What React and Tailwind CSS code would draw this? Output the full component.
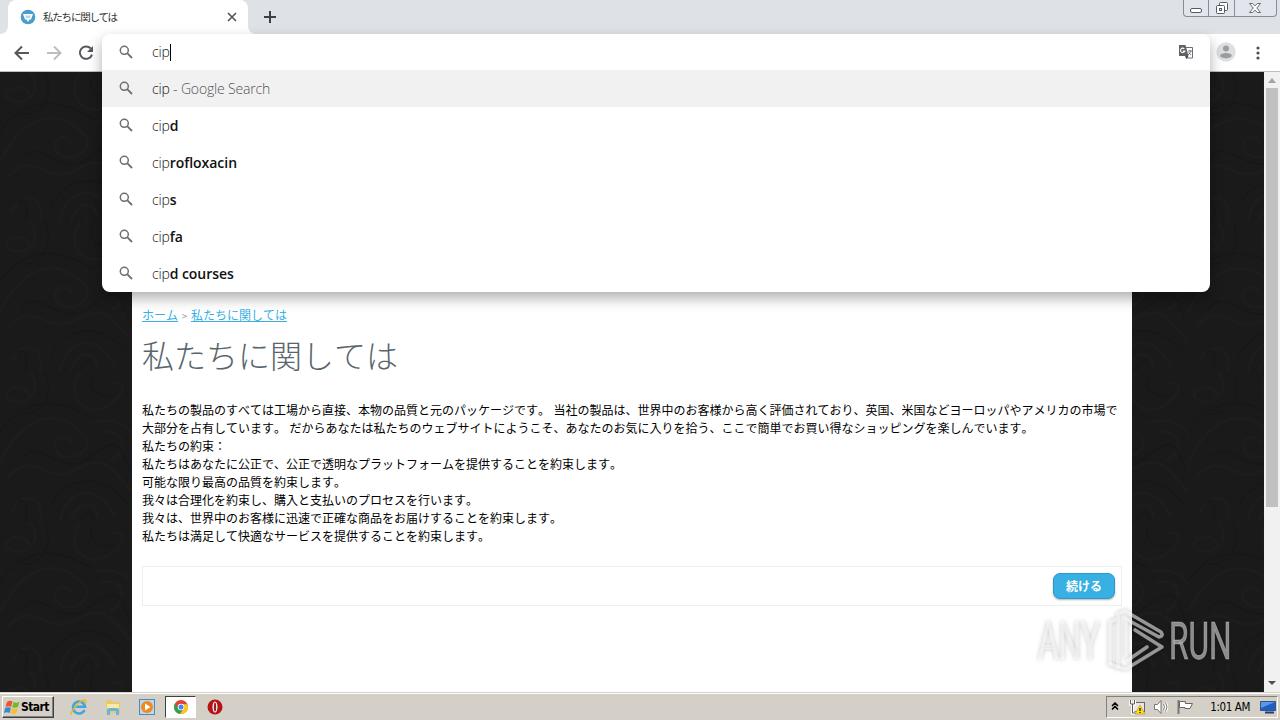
import { ChevronsUp } from 'lucide-react'

const suggestions = [
  { typed: 'cip', rest: '', hint: ' - Google Search' },
  { typed: 'cip', rest: 'd' },
  { typed: 'cip', rest: 'rofloxacin' },
  { typed: 'cip', rest: 's' },
  { typed: 'cip', rest: 'fa' },
  { typed: 'cip', rest: 'd courses' },
]

const paragraphs = [
  '私たちの製品のすべては工場から直接、本物の品質と元のパッケージです。 当社の製品は、世界中のお客様から高く評価されており、英国、米国などヨーロッパやアメリカの市場で',
  '大部分を占有しています。 だからあなたは私たちのウェブサイトにようこそ、あなたのお気に入りを拾う、ここで簡単でお買い得なショッピングを楽しんでいます。',
  '私たちの約束：',
  '私たちはあなたに公正で、公正で透明なプラットフォームを提供することを約束します。',
  '可能な限り最高の品質を約束します。',
  '我々は合理化を約束し、購入と支払いのプロセスを行います。',
  '我々は、世界中のお客様に迅速で正確な商品をお届けすることを約束します。',
  '私たちは満足して快適なサービスを提供することを約束します。',
]

function SearchIcon() {
  return (
    <svg width="16" height="16" viewBox="0 0 16 16" fill="none" stroke="#6b6e72" className="-mt-px shrink-0">
      <circle cx="6.3" cy="6.3" r="4" strokeWidth="1.5" />
      <path d="M9.4 9.4L14 14" strokeWidth="1.8" />
    </svg>
  )
}

function WindowButtons() {
  return (
    <div className="flex h-[17px] w-[94px] rounded-b-[4px] border border-t-0 border-[#868d98] bg-[#e2e5eb]">
      <div className="flex w-[25px] justify-center border-r border-[#868d98]">
        <svg width="14" height="16" fill="#fff" stroke="#555b66">
          <rect x="1.5" y="8.5" width="11" height="4" rx="1.5" />
        </svg>
      </div>
      <div className="flex w-[26px] justify-center border-r border-[#868d98]">
        <svg width="14" height="16" fill="#fff" stroke="#555b66">
          <rect x="4.5" y="2.5" width="8" height="8" rx="1" />
          <rect x="1.5" y="5.5" width="8" height="8" rx="1" />
          <rect x="4.5" y="8.5" width="2" height="2" />
        </svg>
      </div>
      <div className="flex flex-1 justify-center pr-[2px]">
        <svg width="14" height="16" fill="#fff" stroke="#555b66" strokeWidth="0.9">
          <path d="M1.5 3.5h3.2L7 5.9l2.3-2.4h3.2L8.8 8l3.7 4.5H9.3L7 10.1l-2.3 2.4H1.5L5.2 8z" />
        </svg>
      </div>
    </div>
  )
}

function TabStrip() {
  return (
    <div className="flex h-[34px] bg-[#dee1e6]">
      <div className="flex w-2 items-end bg-white">
        <div className="h-[34px] w-2 rounded-br-lg bg-[#dee1e6]" />
      </div>
      <div className="flex h-[34px] w-[240px] items-center rounded-t-lg bg-white pl-3 pr-[9px]">
        <svg width="16" height="16" viewBox="0 0 16 16" className="shrink-0">
          <circle cx="8" cy="8" r="7.3" fill="#4a9cca" />
          <path d="M3 5h10l-2 5.5H9.5L8 13l-1.5-2.5H5z" fill="#fff" />
          <path d="M5 6.5h6l-1 2.5H6z" fill="#b5d9ed" />
        </svg>
        <span className="ml-[7px] flex-1 whitespace-nowrap text-[10.5px] leading-4 tracking-[-1.2px] text-[#333]">私たちに関しては</span>
        <svg width="14" height="14" viewBox="0 0 14 14" stroke="#54585c" strokeWidth="1.7">
          <path d="M3 3l8 8M11 3l-8 8" />
        </svg>
      </div>
      <div className="flex w-2 bg-white">
        <div className="h-[34px] w-2 rounded-bl-lg bg-[#dee1e6]" />
      </div>
      <svg width="14" height="14" viewBox="0 0 14 14" stroke="#3c4043" strokeWidth="2" className="ml-[7px] mt-[10px]">
        <path d="M7 1v12M1 7h12" />
      </svg>
      <div className="ml-auto mr-[3px]"><WindowButtons /></div>
    </div>
  )
}

function Toolbar() {
  return (
    <div className="flex h-[38px] items-center border-b border-[#b9bcc0] bg-white pl-[14px] pr-[14px]">
      <svg width="16" height="16" viewBox="0 0 16 16" fill="none" stroke="#55595d" strokeWidth="2">
        <path d="M15 8H2M8 1.5L1.5 8L8 14.5" />
      </svg>
      <svg width="16" height="16" viewBox="0 0 16 16" fill="none" stroke="#bbbdbf" strokeWidth="2" className="ml-4">
        <path d="M1 8h13M8 1.5L14.5 8L8 14.5" />
      </svg>
      <svg width="16" height="16" viewBox="0 0 16 16" fill="none" stroke="#55595d" strokeWidth="2" className="ml-4">
        <path d="M12.7 3.4A6.2 6.2 0 1 0 14 9.6" />
        <path d="M15 1v6H9z" fill="#55595d" stroke="none" />
      </svg>
      <svg width="20" height="20" viewBox="0 0 20 20" className="-mt-[2px] ml-auto">
        <circle cx="10" cy="10" r="9.7" fill="#dedfe0" />
        <circle cx="10" cy="6.5" r="3" fill="#9b9da0" />
        <ellipse cx="10" cy="13.7" rx="5.7" ry="2.7" fill="#9b9da0" />
      </svg>
      <svg width="6" height="16" viewBox="0 0 6 16" fill="#4d5155" className="ml-[19px] mr-[5px]">
        <circle cx="3" cy="3" r="1.6" />
        <circle cx="3" cy="8" r="1.6" />
        <circle cx="3" cy="13" r="1.6" />
      </svg>
    </div>
  )
}

function TranslateIcon() {
  return (
    <svg width="16" height="16" viewBox="0 0 16 16">
      <path d="M6.5 3.5h8v10.5H8z" fill="#fff" stroke="#6a6e73" />
      <path d="M1 1h6.5l3 11H1z" fill="#5f6368" />
      <path d="M6.3 4.8A2.2 2.2 0 1 0 6.8 7H4.8" fill="none" stroke="#fff" strokeWidth="1.1" />
      <path d="M10 7h4M12 6v1M13.2 7l-3 4M10.7 8.5l2.5 2.5" fill="none" stroke="#6a6e73" strokeWidth="0.9" />
      <path d="M7.5 12h3l-2 3z" fill="#45494d" />
    </svg>
  )
}

function Omnibox() {
  return (
    <div className="absolute left-[102px] top-[34px] z-10 w-[1108px] overflow-hidden rounded-lg bg-white font-['Open_Sans',sans-serif] text-[14px] text-[#111] shadow-[0_6px_14px_rgba(0,0,0,0.32)]">
      <div className="flex h-[36px] items-center pl-4 pr-4">
        <SearchIcon />
        <span className="-mt-px ml-[18px] font-light tracking-[-0.2px]">cip</span>
        <span className="h-[17px] w-px bg-black" />
        <span className="ml-auto"><TranslateIcon /></span>
      </div>
      {suggestions.map((s, i) => (
        <div key={i} className={`flex h-[37px] items-center pl-4 ${i === 0 ? 'bg-[#f1f1f1]' : ''}`}>
          <SearchIcon />
          <span className="ml-[18px] whitespace-pre font-light tracking-[-0.17px]">
            {s.typed}
            <span className="font-semibold tracking-[-0.03px]">{s.rest}</span>
            {s.hint && <span className="text-[#505357]">{s.hint}</span>}
          </span>
        </div>
      ))}
    </div>
  )
}

// faint damask wallpaper on both sides of the shop page
function Wallpaper() {
  return (
    <svg className="absolute inset-0 h-full w-full">
      <defs>
        <pattern id="damask" width="132" height="150" patternUnits="userSpaceOnUse">
          <g fill="none" stroke="#1d1d1d" strokeWidth="2">
            <path d="M0 90C25 40 60 35 86 65C95 82 60 95 55 75C53 64 70 62 72 72" />
            <path d="M8 105C35 75 45 115 75 98S110 95 132 120" />
            <path d="M30 0C45 20 25 35 10 28S25 5 30 25M80 0C65 25 85 45 105 35S130 5 110 12" />
            <path d="M40 150C45 120 20 120 12 140M60 150C65 115 100 110 115 145M70 150C80 125 95 130 98 145" />
            <path d="M100 60C130 55 125 85 110 88M95 50C115 45 132 55 132 65" />
          </g>
          <g fill="none" stroke="#171717" strokeWidth="2">
            <path d="M0 60C20 30 50 20 95 48M20 88C40 60 60 110 90 85S120 75 130 100" />
            <path d="M45 0C55 25 40 45 20 42M95 0C85 15 95 28 115 22M25 150C30 130 22 125 18 132" />
            <path d="M50 135C65 105 100 98 125 130M80 150C88 135 92 138 93 148" />
          </g>
        </pattern>
      </defs>
      <rect width="100%" height="100%" fill="url(#damask)" />
    </svg>
  )
}

function Watermark() {
  return (
    <svg width="206" height="68" viewBox="0 0 206 68" className="absolute left-[1034px] top-[606px] z-10 overflow-visible drop-shadow-[0_0_2px_rgba(0,0,0,0.4)]">
      <g fill="#fff" fillOpacity="0.5" stroke="#fff" strokeOpacity="0.3" strokeWidth="1" fontFamily="Roboto, sans-serif" fontSize="51">
        <text transform="translate(4 53) scale(0.62 1)">ANY</text>
        <text transform="translate(135 53) scale(0.62 1)">RUN</text>
      </g>
      <g fill="none" stroke="#fff" strokeOpacity="0.55" strokeWidth="3.6" strokeLinejoin="round" strokeLinecap="round">
        <path d="M76 58V16l8-3M84 61V8l7-3l36 21q3 4-2 5L92 13v37" />
        <path d="M101 24l27 17L92 63l-8-2M94 54l19-13M76 58l8 3" />
      </g>
    </svg>
  )
}

function Page() {
  return (
    <div className="relative flex h-[620px] bg-[#1a1a1a]">
      <Wallpaper />
      <div className="relative ml-[132px] w-[1000px] bg-white px-[10px] pt-[233px] [font-kerning:none]">
        <div className="flex h-[20px] items-center text-[12px] text-[#38b0e3]">
          <span className="underline">ホーム</span>
          <span className="w-[13px] text-center text-[10px] text-[#999]">&gt;</span>
          <span className="underline">私たちに関しては</span>
        </div>
        <h1 className="mt-[5px] h-[48px] text-[32px] font-light leading-[48px] text-[#59656c]">私たちに関しては</h1>
        <div className="mt-[23px] whitespace-nowrap text-[12px] leading-[18px] text-black">
          {paragraphs.map((p, i) => <p key={i} className="[word-spacing:0.8px]">{p}</p>)}
        </div>
        <div className="mt-[21px] flex h-[40px] w-[980px] items-center justify-end border border-[#eee] pr-[6px]">
          <button className="h-[26px] w-[62px] rounded-[7px] border border-[#2b9bcb] bg-[#38b0e3] text-[12px] font-bold leading-[22px] text-white shadow-[0_1px_2px_rgba(0,0,0,0.3)]">続ける</button>
        </div>
      </div>
      <div className="relative ml-auto flex w-[16px] flex-col items-center bg-[#f1f1f1]">
        <svg width="16" height="16" fill="#a3a3a3"><path d="M8 6l4 5H4z" /></svg>
        <div className="h-[419px] w-[12px] bg-[#c1c1c1]" />
        <svg width="16" height="16" fill="#505050" className="mt-auto"><path d="M4 5h8l-4 4z" /></svg>
      </div>
    </div>
  )
}

function Taskbar() {
  return (
    <div className="flex h-[28px] items-center border-t border-[#d4d0c8] bg-[#d4d0c8] pl-[2px] pt-px shadow-[inset_0_1px_0_#fff]">
      <div className="flex h-[22px] w-[52px] items-center border border-b-[#404040] border-l-white border-r-[#404040] border-t-white pl-[1px] shadow-[inset_-1px_-1px_0_#808080]">
        <svg width="17" height="17" viewBox="0 0 17 17" className="shrink-0">
          <path d="M3 3q3-2 5.5-.5L7.2 8Q4.5 6.5 1.5 8z" fill="#e9572b" />
          <path d="M9.5 3q3 1.5 6-.3L14 8q-3 1.5-5.7.3z" fill="#74b82c" />
          <path d="M1.2 9q3-1.5 5.7 0l-1.3 5Q3 12.5 0 14z" fill="#3b86cf" />
          <path d="M8 9.3q3 1.5 5.7 0l-1.4 5q-3 1.5-5.6 0z" fill="#f6bf2e" />
        </svg>
        <span className="font-['DejaVu_Sans_Condensed','DejaVu_Sans',sans-serif] text-[12px] font-bold leading-[18px] tracking-[-0.6px] text-black">Start</span>
      </div>

      <svg width="18" height="18" viewBox="0 0 18 18" className="ml-[16px]" fill="none">
        <path d="M14.5 12A6 6 0 1 1 15 8.8H5" stroke="#43a5df" strokeWidth="2.6" />
        <path d="M2 16C-2 18 8 3 14 2c3 0 2 2 1 4" stroke="#e9b92f" strokeWidth="1.4" />
      </svg>
      <svg width="18" height="18" viewBox="0 0 18 18" className="ml-[16px]">
        <path d="M2 2h5l1 2h8v11H2z" fill="#e7c969" />
        <path d="M3 6h12v7H3z" fill="#f8e9a8" />
        <path d="M3 17v-5q0-2 2-2h8q2 0 2 2v5h-3v-4H6v4z" fill="#68b4dd" />
      </svg>
      <svg width="18" height="18" viewBox="0 0 18 18" className="ml-[16px]">
        <rect x="1.5" y="1.5" width="15" height="15" fill="#b9d7ee" stroke="#5189bb" />
        <circle cx="9" cy="9" r="6" fill="#f18a1c" />
        <path d="M7 5.5l5.5 3.5L7 12.5z" fill="#fff" />
      </svg>
      <div className="ml-[9px] flex h-[22px] w-[31px] items-center justify-center border border-b-white border-l-[#404040] border-r-white border-t-[#404040] bg-white">
        <svg width="14" height="14" viewBox="0 0 14 14">
          <circle cx="7" cy="7" r="7" fill="#e34133" />
          <path d="M1 3.5A7 7 0 0 0 6 14L9.5 8.5L7 7L4 8z" fill="#31a350" />
          <path d="M6 14A7 7 0 0 0 13.5 4.3H7L10 8z" fill="#fbc918" />
          <circle cx="7" cy="7" r="3.3" fill="#fff" />
          <circle cx="7" cy="7" r="2.5" fill="#4285f4" />
        </svg>
      </div>
      <svg width="16" height="16" viewBox="0 0 16 16" className="ml-[11px]">
        <circle cx="8" cy="8" r="7.5" fill="#b71317" />
        <ellipse cx="8" cy="8" rx="2.5" ry="5.5" fill="#fff" />
        <ellipse cx="8" cy="8" rx="1.2" ry="4.5" fill="#9b2020" />
      </svg>

      <div className="ml-auto mr-[2px] flex h-[22px] w-[172px] items-center border border-b-white border-l-[#808080] border-r-white border-t-[#808080]">
        <ChevronsUp size={12} strokeWidth={3.5} color="#000" className="-mt-[2px] ml-[2px]" />
        <svg width="17" height="16" viewBox="0 0 17 16" className="ml-[8px]">
          <rect x="4.5" y="3.5" width="11" height="9" fill="#e6e6e6" stroke="#666" />
          <path d="M1.5 1v4h4V1M3.5 5v9h3" fill="none" stroke="#fff" strokeWidth="3" />
          <path d="M1.5 1v4h4V1M3.5 5v9h3" fill="none" stroke="#555" />
          <path d="M11 6l5 9H6z" fill="#ffdf17" stroke="#b59300" strokeWidth="0.6" />
          <path d="M11 9v3M11 13v1" stroke="#000" strokeWidth="1.2" />
        </svg>
        <svg width="17" height="16" viewBox="0 0 17 16" className="ml-[7px]" fill="none" stroke="#777">
          <path d="M1.5 5.5h3l3.5-4v13l-3.500-4h-3z" fill="#fff" />
          <path d="M10.5 5q2 3 0 6M12.5 3.5q3 4.5 0 9" stroke="#fff" strokeWidth="2.5" />
          <path d="M10.5 5q2 3 0 6M12.5 3.5q3 4.5 0 9" />
        </svg>
        <svg width="17" height="16" viewBox="0 0 17 16" className="ml-[7px]">
          <path d="M1.5 1v14" stroke="#777" strokeWidth="2" />
          <path d="M2.5 2.5h6v2h7l-2.5 5H8v-1H2.5z" fill="#fff" stroke="#666" />
        </svg>
        <span className="ml-auto whitespace-nowrap font-['DejaVu_Sans_Condensed','DejaVu_Sans',sans-serif] text-[11.5px] leading-4 tracking-[-0.4px] text-black">1:01 AM</span>
        <svg width="16" height="14" viewBox="0 0 16 14" className="ml-[10px] mr-[1px]">
          <path d="M.5 1.5h15v9H.5z" fill="#1c5fc0" stroke="#31548c" />
          <path d="M1 2h14L1 8z" fill="#5a9ae5" />
          <path d="M5 12.5h9" stroke="#263d69" strokeWidth="2" />
        </svg>
      </div>
    </div>
  )
}

export default function App() {
  return (
    <div className="relative h-[720px] w-[1280px] overflow-hidden font-['Noto_Sans_CJK_JP',sans-serif]">
      <TabStrip />
      <Toolbar />
      <Page />
      <Taskbar />
      <Omnibox />
      <Watermark />
    </div>
  )
}
